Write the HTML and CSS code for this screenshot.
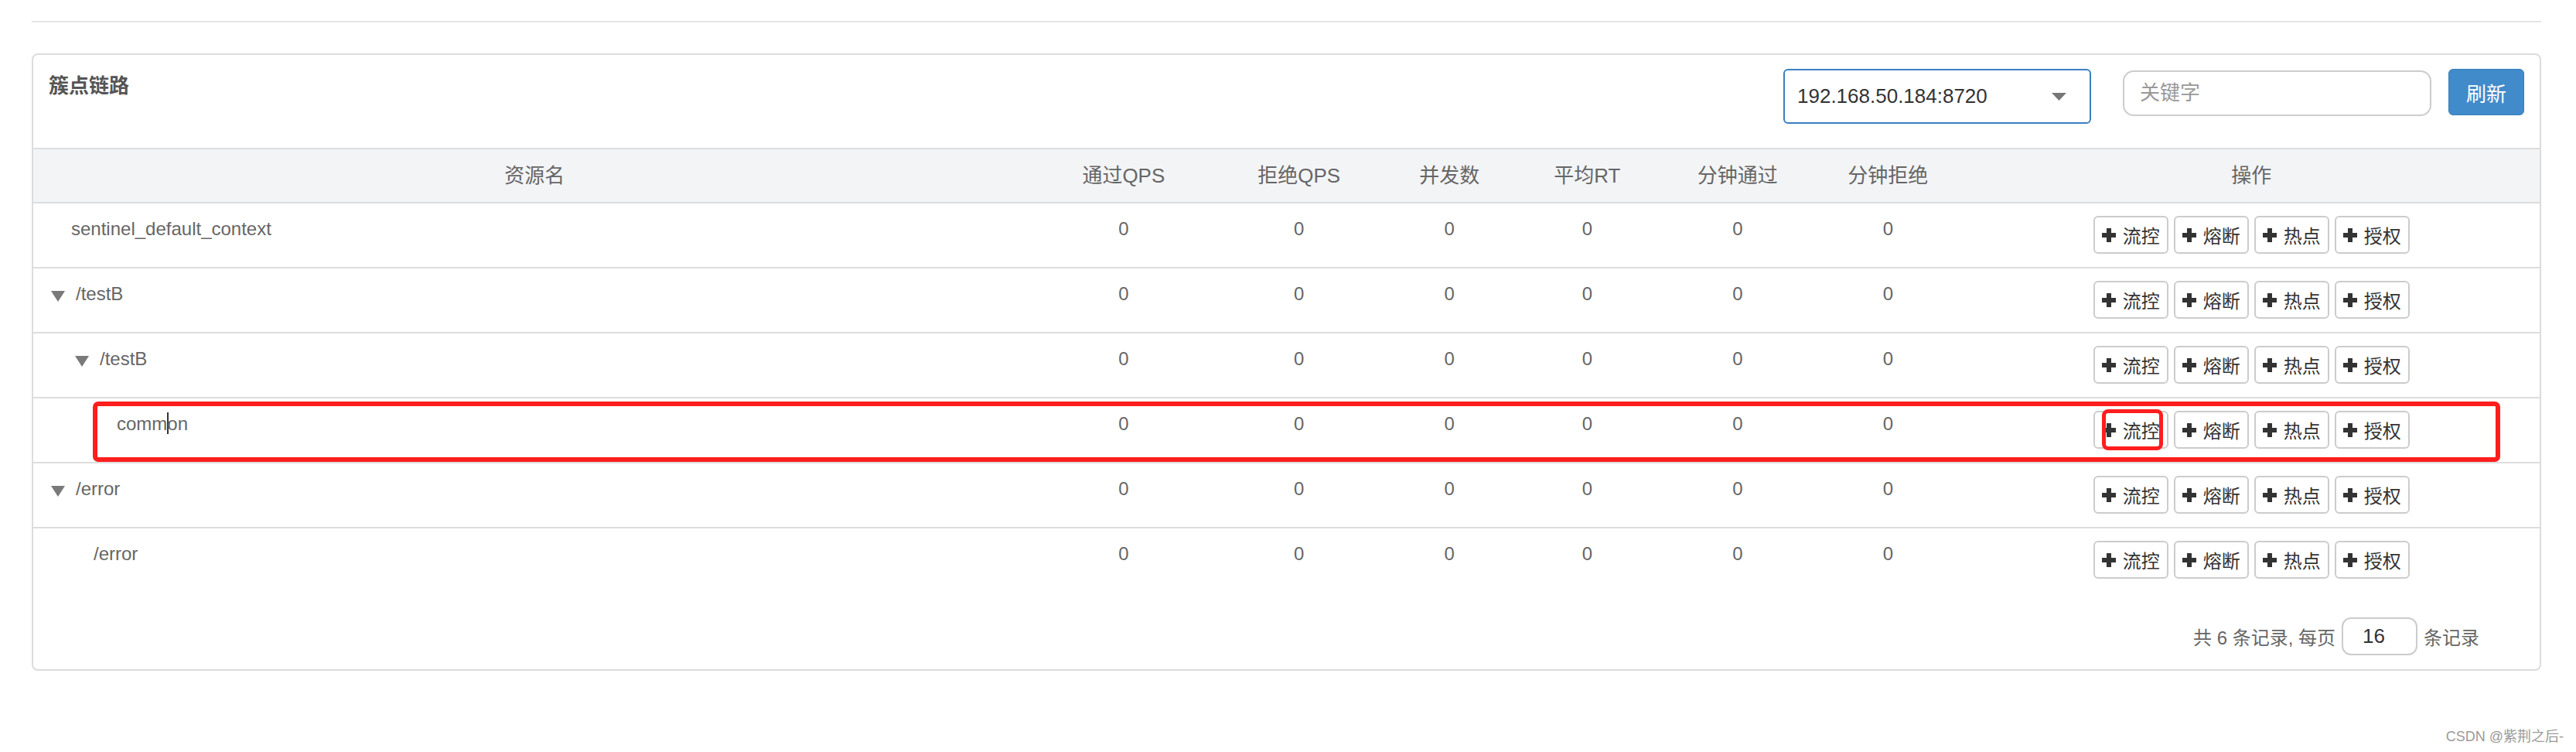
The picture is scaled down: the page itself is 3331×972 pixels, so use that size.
FILE: index.html
```html
<!DOCTYPE html>
<html>
<head>
    <meta charset="UTF-8">
    <title>簇点链路</title>
    <link rel="stylesheet" href="styles.css">
</head>
<body>
    <div class="page">
        <div class="divider"></div>

        <div class="card">
            <div class="card-head">
                <div class="card-title">簇点链路</div>
                <div class="tools">
                    <div class="machine-select">
                        <span>192.168.50.184:8720</span>
                        <svg class="select-caret" width="19" height="10" viewBox="0 0 19 10"><polygon points="0,0 19,0 9.5,10" fill="#777"/></svg>
                    </div>
                    <input class="search" type="text" placeholder="关键字">
                    <button class="btn-refresh">刷新</button>
                </div>
            </div>

            <table class="node-table">
                <colgroup>
                    <col class="c-name">
                    <col class="c-qps">
                    <col class="c-qps">
                    <col class="c-thread">
                    <col class="c-num">
                    <col class="c-num">
                    <col class="c-num">
                    <col class="c-ops">
                </colgroup>
                <thead>
                    <tr>
                        <th>资源名</th>
                        <th>通过QPS</th>
                        <th>拒绝QPS</th>
                        <th>并发数</th>
                        <th>平均RT</th>
                        <th>分钟通过</th>
                        <th>分钟拒绝</th>
                        <th>操作</th>
                    </tr>
                </thead>
                <tbody>
                    <tr>
                        <td class="name leaf lv1">sentinel_default_context</td>
                        <td>0</td><td>0</td><td>0</td><td>0</td><td>0</td><td>0</td>
                        <td><div class="ops">
                            <button class="op"><svg class="plus" viewBox="0 0 18 18"><rect x="6" y="0" width="6" height="18"/><rect x="0" y="6" width="18" height="6"/></svg>流控</button>
                            <button class="op"><svg class="plus" viewBox="0 0 18 18"><rect x="6" y="0" width="6" height="18"/><rect x="0" y="6" width="18" height="6"/></svg>熔断</button>
                            <button class="op"><svg class="plus" viewBox="0 0 18 18"><rect x="6" y="0" width="6" height="18"/><rect x="0" y="6" width="18" height="6"/></svg>热点</button>
                            <button class="op"><svg class="plus" viewBox="0 0 18 18"><rect x="6" y="0" width="6" height="18"/><rect x="0" y="6" width="18" height="6"/></svg>授权</button>
                        </div></td>
                    </tr>
                    <tr>
                        <td class="name lv1"><svg class="tree-arrow" viewBox="0 0 18 14"><polygon points="0,0 18,0 9,14"/></svg>/testB</td>
                        <td>0</td><td>0</td><td>0</td><td>0</td><td>0</td><td>0</td>
                        <td><div class="ops">
                            <button class="op"><svg class="plus" viewBox="0 0 18 18"><rect x="6" y="0" width="6" height="18"/><rect x="0" y="6" width="18" height="6"/></svg>流控</button>
                            <button class="op"><svg class="plus" viewBox="0 0 18 18"><rect x="6" y="0" width="6" height="18"/><rect x="0" y="6" width="18" height="6"/></svg>熔断</button>
                            <button class="op"><svg class="plus" viewBox="0 0 18 18"><rect x="6" y="0" width="6" height="18"/><rect x="0" y="6" width="18" height="6"/></svg>热点</button>
                            <button class="op"><svg class="plus" viewBox="0 0 18 18"><rect x="6" y="0" width="6" height="18"/><rect x="0" y="6" width="18" height="6"/></svg>授权</button>
                        </div></td>
                    </tr>
                    <tr>
                        <td class="name lv2"><svg class="tree-arrow" viewBox="0 0 18 14"><polygon points="0,0 18,0 9,14"/></svg>/testB</td>
                        <td>0</td><td>0</td><td>0</td><td>0</td><td>0</td><td>0</td>
                        <td><div class="ops">
                            <button class="op"><svg class="plus" viewBox="0 0 18 18"><rect x="6" y="0" width="6" height="18"/><rect x="0" y="6" width="18" height="6"/></svg>流控</button>
                            <button class="op"><svg class="plus" viewBox="0 0 18 18"><rect x="6" y="0" width="6" height="18"/><rect x="0" y="6" width="18" height="6"/></svg>熔断</button>
                            <button class="op"><svg class="plus" viewBox="0 0 18 18"><rect x="6" y="0" width="6" height="18"/><rect x="0" y="6" width="18" height="6"/></svg>热点</button>
                            <button class="op"><svg class="plus" viewBox="0 0 18 18"><rect x="6" y="0" width="6" height="18"/><rect x="0" y="6" width="18" height="6"/></svg>授权</button>
                        </div></td>
                    </tr>
                    <tr>
                        <td class="name leaf lv3">comm<span class="text-cursor"></span>on</td>
                        <td>0</td><td>0</td><td>0</td><td>0</td><td>0</td><td>0</td>
                        <td><div class="ops">
                            <button class="op"><svg class="plus" viewBox="0 0 18 18"><rect x="6" y="0" width="6" height="18"/><rect x="0" y="6" width="18" height="6"/></svg>流控</button>
                            <button class="op"><svg class="plus" viewBox="0 0 18 18"><rect x="6" y="0" width="6" height="18"/><rect x="0" y="6" width="18" height="6"/></svg>熔断</button>
                            <button class="op"><svg class="plus" viewBox="0 0 18 18"><rect x="6" y="0" width="6" height="18"/><rect x="0" y="6" width="18" height="6"/></svg>热点</button>
                            <button class="op"><svg class="plus" viewBox="0 0 18 18"><rect x="6" y="0" width="6" height="18"/><rect x="0" y="6" width="18" height="6"/></svg>授权</button>
                        </div></td>
                    </tr>
                    <tr>
                        <td class="name lv1"><svg class="tree-arrow" viewBox="0 0 18 14"><polygon points="0,0 18,0 9,14"/></svg>/error</td>
                        <td>0</td><td>0</td><td>0</td><td>0</td><td>0</td><td>0</td>
                        <td><div class="ops">
                            <button class="op"><svg class="plus" viewBox="0 0 18 18"><rect x="6" y="0" width="6" height="18"/><rect x="0" y="6" width="18" height="6"/></svg>流控</button>
                            <button class="op"><svg class="plus" viewBox="0 0 18 18"><rect x="6" y="0" width="6" height="18"/><rect x="0" y="6" width="18" height="6"/></svg>熔断</button>
                            <button class="op"><svg class="plus" viewBox="0 0 18 18"><rect x="6" y="0" width="6" height="18"/><rect x="0" y="6" width="18" height="6"/></svg>热点</button>
                            <button class="op"><svg class="plus" viewBox="0 0 18 18"><rect x="6" y="0" width="6" height="18"/><rect x="0" y="6" width="18" height="6"/></svg>授权</button>
                        </div></td>
                    </tr>
                    <tr>
                        <td class="name leaf lv2">/error</td>
                        <td>0</td><td>0</td><td>0</td><td>0</td><td>0</td><td>0</td>
                        <td><div class="ops">
                            <button class="op"><svg class="plus" viewBox="0 0 18 18"><rect x="6" y="0" width="6" height="18"/><rect x="0" y="6" width="18" height="6"/></svg>流控</button>
                            <button class="op"><svg class="plus" viewBox="0 0 18 18"><rect x="6" y="0" width="6" height="18"/><rect x="0" y="6" width="18" height="6"/></svg>熔断</button>
                            <button class="op"><svg class="plus" viewBox="0 0 18 18"><rect x="6" y="0" width="6" height="18"/><rect x="0" y="6" width="18" height="6"/></svg>热点</button>
                            <button class="op"><svg class="plus" viewBox="0 0 18 18"><rect x="6" y="0" width="6" height="18"/><rect x="0" y="6" width="18" height="6"/></svg>授权</button>
                        </div></td>
                    </tr>
                </tbody>
            </table>

            <div class="pager">
                <span>共 6 条记录, 每页</span>
                <input class="page-size" type="text" value="16">
                <span>条记录</span>
            </div>

            <!-- annotation boxes drawn over the screenshot -->
            <div class="mark mark-row"></div>
            <div class="mark mark-btn"></div>
        </div>
    </div>

    <div class="watermark">CSDN @紫荆之后-</div>
</body>
</html>
```

FILE: styles.css
```css
body {
    margin: 0;
    background: #fff;
    font-family: "Liberation Sans", "Noto Sans CJK SC", sans-serif;
    color: #666;
}
.page {
    padding: 27px 0 0 41px;
    width: 3245px;
}
.divider {
    height: 2px;
    background: #e5e5e5;
}
.card {
    position: relative;
    margin-top: 40px;
    border: 2px solid #dcdcdc;
    border-radius: 8px;
    background: #fff;
}
.card-head {
    height: 120px;
    box-sizing: border-box;
    padding: 18px 20px 0 20px;
    display: flex;
    justify-content: space-between;
    align-items: flex-start;
}
.card-title {
    margin-top: 4px;
    font-size: 26px;
    line-height: 36px;
    font-weight: bold;
    color: #555;
}
.tools {
    display: flex;
    align-items: flex-start;
}
.machine-select {
    width: 398px;
    height: 71px;
    box-sizing: border-box;
    border: 2px solid #3b7fc0;
    border-radius: 6px;
    padding: 0 30px 0 16px;
    display: flex;
    justify-content: space-between;
    align-items: center;
    font-size: 26px;
    color: #333;
    margin-right: 41px;
}
.select-caret {
    display: block;
}
.search {
    width: 399px;
    height: 59px;
    margin-top: 2px;
    margin-right: 22px;
    box-sizing: border-box;
    border: 2px solid #ccc;
    border-radius: 14px;
    padding: 0 20px;
    font-family: inherit;
    font-size: 26px;
    color: #333;
    outline: none;
}
.search::placeholder {
    color: #999;
}
.btn-refresh {
    width: 98px;
    height: 60px;
    border: 1px solid #357ebd;
    border-radius: 6px;
    background: #428bca;
    color: #fff;
    font-family: inherit;
    font-size: 26px;
    padding: 0;
}

.node-table {
    width: 100%;
    border-collapse: collapse;
    table-layout: fixed;
}
.c-name { width: 40%; }
.c-qps { width: 7%; }
.c-thread { width: 5%; }
.c-num { width: 6%; }
.c-ops { width: 23%; }
.node-table th {
    background: #f3f4f6;
    border-top: 2px solid #ddd;
    border-bottom: 2px solid #ddd;
    padding: 16px 0;
    font-size: 26px;
    line-height: 36px;
    font-weight: normal;
    color: #666;
    text-align: center;
}
.node-table td {
    padding: 16px 0 12px;
    font-size: 24px;
    line-height: 34px;
    color: #666;
    text-align: center;
    vertical-align: top;
    border-bottom: 2px solid #ddd;
}
.node-table tbody tr:last-child td {
    border-bottom: none;
}
.node-table td.name {
    text-align: left;
    white-space: nowrap;
}
.lv1 { padding-left: 23px !important; }
.lv2 { padding-left: 54px !important; }
.leaf.lv1 { padding-left: 49px !important; }
.leaf.lv2 { padding-left: 78px !important; }
.leaf.lv3 { padding-left: 108px !important; }
.tree-arrow {
    width: 18px;
    height: 14px;
    fill: #7a7a7a;
    margin-right: 14px;
    vertical-align: -2px;
}
.text-cursor {
    display: inline-block;
    width: 0;
    height: 28px;
    border-left: 2px solid #333;
    margin-right: -2px;
    vertical-align: -5px;
}
.ops {
    height: 54px;
    display: flex;
    justify-content: center;
    gap: 7px;
}
.op {
    display: inline-flex;
    align-items: center;
    gap: 9px;
    height: 49px;
    box-sizing: border-box;
    padding: 0 9px;
    border: 2px solid #ccc;
    border-radius: 6px;
    background: #fff;
    color: #333;
    font-family: inherit;
    font-size: 24px;
}
.plus {
    width: 18px;
    height: 18px;
    fill: #333;
}

.pager {
    margin-top: 33px;
    padding: 0 78px 18px 0;
    display: flex;
    justify-content: flex-end;
    align-items: center;
    gap: 8px;
    font-size: 24px;
    color: #666;
}
.page-size {
    width: 98px;
    height: 49px;
    box-sizing: border-box;
    border: 2px solid #ccc;
    border-radius: 12px;
    padding: 0 0 0 25px;
    font-family: inherit;
    font-size: 26px;
    color: #333;
    outline: none;
}

.mark {
    position: absolute;
    box-sizing: border-box;
    border: 6px solid #ff1e1e;
    border-radius: 7px;
    pointer-events: none;
}
.mark-row {
    left: 77px;
    top: 448px;
    width: 3113px;
    height: 78px;
}
.mark-btn {
    left: 2675px;
    top: 458px;
    width: 79px;
    height: 53px;
    border-width: 5px;
    border-radius: 8px;
}

.watermark {
    margin-top: 75px;
    padding-right: 16px;
    text-align: right;
    font-size: 18px;
    line-height: 20px;
    color: #9a9a9a;
}
```
